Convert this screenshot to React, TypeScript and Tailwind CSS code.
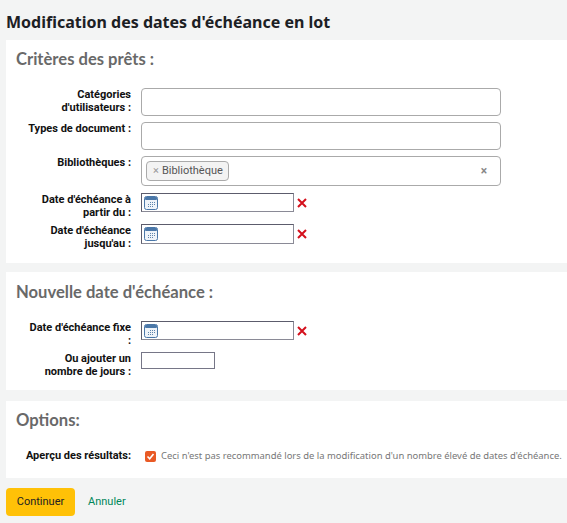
const lato = { fontFamily: '"Lato", sans-serif' };
const noto = { fontFamily: '"Noto Sans", sans-serif' };
const roboto = { fontFamily: 'Roboto, sans-serif' };

function Cal() {
  return (
    <svg width="14" height="14" viewBox="0 0 14 14" className="absolute left-[2px] top-[2px]">
      <rect x="0.5" y="0.5" width="13" height="13" rx="2" fill="#eef3f9" stroke="#4a77a8" />
      <rect x="1" y="1" width="12" height="3" rx="1" fill="#4a77a8" />
      <g fill="#5f86ae">
        <rect x="6" y="6" width="1" height="1" /><rect x="8" y="6" width="1" height="1" /><rect x="10" y="6" width="1" height="1" />
        <rect x="4" y="8" width="1" height="1" /><rect x="6" y="8" width="1" height="1" /><rect x="8" y="8" width="1" height="1" /><rect x="10" y="8" width="1" height="1" />
        <rect x="4" y="10" width="1" height="1" /><rect x="6" y="10" width="1" height="1" /><rect x="8" y="10" width="1" height="1" />
      </g>
    </svg>
  );
}

function RedX() {
  return (
    <svg width="10" height="10" viewBox="0 0 10 10">
      <path d="M1 1L9 9M9 1L1 9" stroke="#d4101c" strokeWidth="2" />
    </svg>
  );
}

function Label({ children }: { children: React.ReactNode }) {
  return (
    <div className="w-[125px] shrink-0 text-right text-[11px] font-bold leading-[13px] text-[#111]" style={roboto}>
      {children}
    </div>
  );
}

function DateInput({ tall = false }: { tall?: boolean }) {
  return (
    <div className="flex items-center gap-[3px] self-start">
      <div className={`relative ${tall ? "h-[20px]" : "h-[19px]"} w-[153px] border border-[#8a8a96] border-t-[#5c5c6c] border-l-[#5c5c6c] bg-white`}>
        <Cal />
      </div>
      <RedX />
    </div>
  );
}

function Box({ h }: { h: string }) {
  return <div className={`${h} w-[360px] rounded-[4px] border border-[#aaa] bg-white`} />;
}

function H2({ children }: { children: React.ReactNode }) {
  return <h2 className="text-[16.6px] font-bold leading-[20px] text-[#696969]" style={lato}>{children}</h2>;
}

export default function App() {
  return (
    <div className="h-[523px] w-[567px] overflow-hidden bg-[#f3f4f4]" style={roboto}>
      <h1 className="pl-[6px] pt-[12px] text-[16px] font-bold leading-[20px] text-[#1c2024]" style={noto}>
        Modification des dates d'échéance en lot
      </h1>
      <section className="mt-[8px] ml-[6px] h-[223px] bg-white pl-[10px] pt-[9px]">
        <H2>Critères des prêts :</H2>
        <div className="ml-[-10px] mt-[19px] flex flex-col">
          <div className="flex gap-[10px]">
            <Label>Catégories<br />d'utilisateurs :</Label>
            <Box h="h-[28px]" />
          </div>
          <div className="mt-[6px] flex gap-[10px]">
            <Label>Types de document :</Label>
            <Box h="h-[28px]" />
          </div>
          <div className="mt-[6px] flex gap-[10px]">
            <Label>Bibliothèques :</Label>
            <div className="flex h-[30px] w-[360px] items-center justify-between rounded-[4px] border border-[#aaa] bg-white pl-[4px] pr-[13px]">
              <span className="flex h-[20px] w-[83px] items-center gap-[3px] rounded-[4px] border border-[#aaa] bg-[#f3f3f3] pl-[6px] text-[11px] text-[#555]">
                <span className="text-[#999]">×</span>Bibliothèque
              </span>
              <span className="text-[12px] font-bold leading-none text-[#888]">×</span>
            </div>
          </div>
          <div className="mt-[7px] flex gap-[10px]">
            <Label>Date d'échéance à<br />partir du :</Label>
            <DateInput />
          </div>
          <div className="mt-[5px] flex gap-[10px]">
            <Label>Date d'échéance<br />jusqu'au :</Label>
            <DateInput tall />
          </div>
        </div>
      </section>
      <section className="mt-[9px] ml-[6px] h-[118px] bg-white pl-[10px] pt-[10px]">
        <H2>Nouvelle date d'échéance :</H2>
        <div className="ml-[-10px] mt-[19px] flex flex-col">
          <div className="flex gap-[10px]">
            <Label>Date d'échéance fixe<br />:</Label>
            <DateInput />
          </div>
          <div className="mt-[5px] flex gap-[10px]">
            <Label>Ou ajouter un<br />nombre de jours :</Label>
            <div className="h-[17px] w-[74px] border border-[#767687] bg-white" />
          </div>
        </div>
      </section>
      <section className="mt-[11px] ml-[6px] h-[77px] bg-white pl-[10px] pt-[9px]">
        <H2>Options:</H2>
        <div className="ml-[-10px] mt-[19px] flex items-start gap-[14px]">
          <Label>Aperçu des résultats:</Label>
          <div className="flex items-center gap-[5px]">
            <span className="flex h-[11px] w-[11px] items-center justify-center rounded-[2px] bg-[#e95a25]">
              <svg width="9" height="9" viewBox="0 0 9 9"><path d="M1.5 4.5L3.7 6.7L7.5 2" stroke="white" strokeWidth="1.6" fill="none" /></svg>
            </span>
            <span className="whitespace-nowrap text-[9.43px] text-[#777]" style={noto}>
              Ceci n'est pas recommandé lors de la modification d'un nombre élevé de dates d'échéance.
            </span>
          </div>
        </div>
      </section>
      <div className="ml-[6px] mt-[10px] flex items-center gap-[13px]">
        <button className="h-[28px] w-[69px] rounded-[4px] bg-[#ffc107] text-[11px] text-[#222]">Continuer</button>
        <a className="text-[11px] text-[#00875a]">Annuler</a>
      </div>
    </div>
  );
}
